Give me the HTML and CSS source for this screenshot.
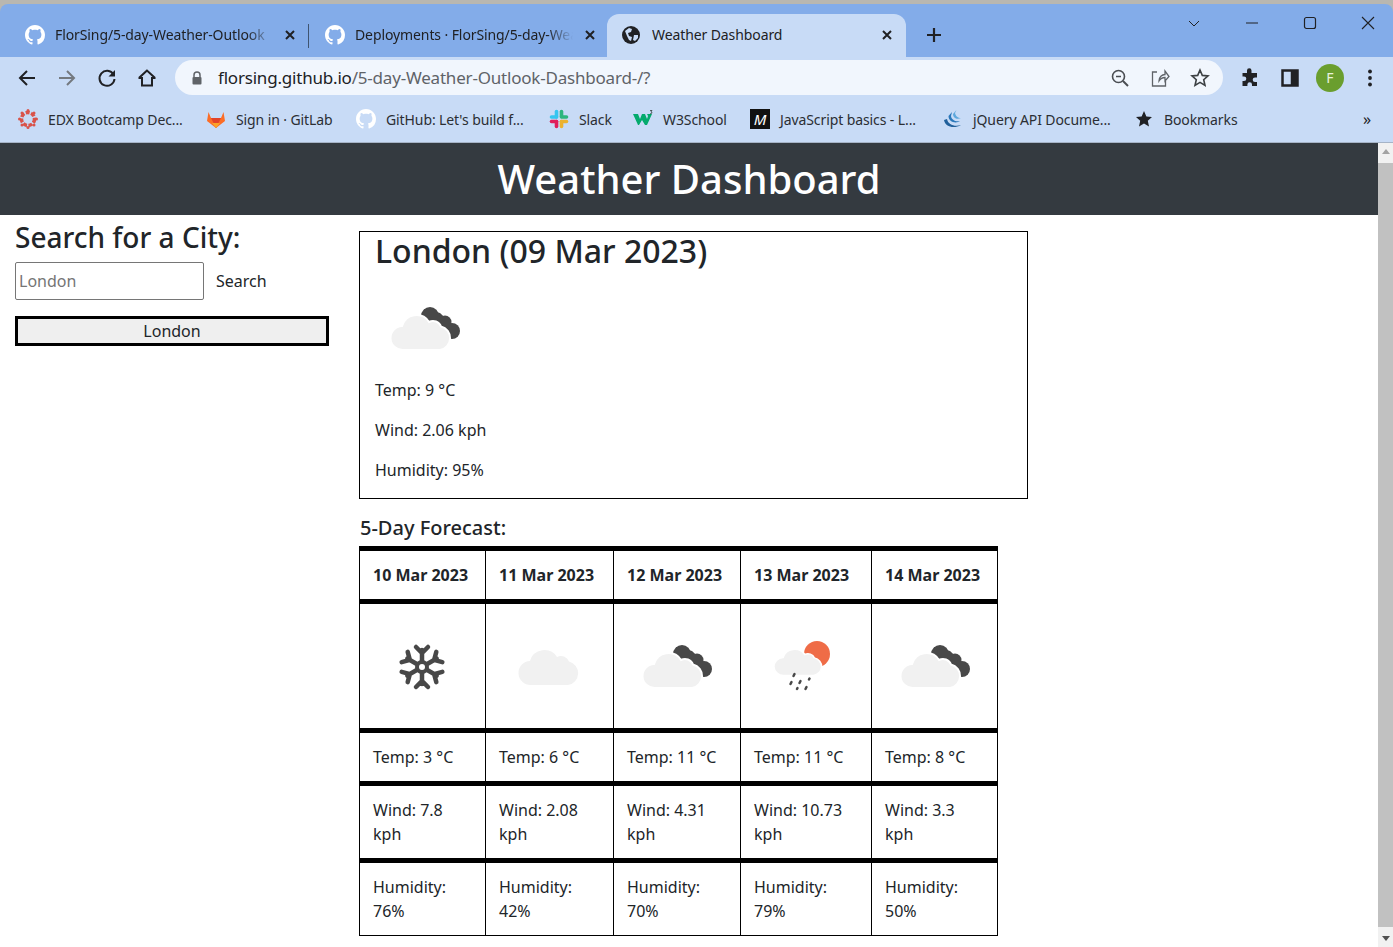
FILE: index.html
```html
<!DOCTYPE html>
<html lang="en">
<head>
    <meta charset="UTF-8">
    <title>Weather Dashboard</title>
    <link rel="stylesheet" href="styles.css">
</head>
<body>
    <svg class="defs" width="0" height="0">
        <defs>
            <path id="github" d="M8 0C3.58 0 0 3.58 0 8c0 3.54 2.29 6.53 5.47 7.59.4.07.55-.17.55-.38 0-.19-.01-.82-.01-1.49-2.01.37-2.53-.49-2.69-.94-.09-.23-.48-.94-.82-1.13-.28-.15-.68-.52-.01-.53.63-.01 1.08.58 1.23.82.72 1.21 1.87.87 2.33.66.07-.52.28-.87.51-1.07-1.78-.2-3.64-.89-3.64-3.95 0-.87.31-1.59.82-2.15-.08-.2-.36-1.02.08-2.12 0 0 .67-.21 2.2.82.64-.18 1.32-.27 2-.27.68 0 1.36.09 2 .27 1.53-1.04 2.2-.82 2.2-.82.44 1.1.16 1.92.08 2.12.51.56.82 1.27.82 2.15 0 3.07-1.87 3.75-3.65 3.95.29.25.54.73.54 1.48 0 1.07-.01 1.93-.01 2.2 0 .21.15.46.55.38A8.013 8.013 0 0016 8c0-4.42-3.58-8-8-8z"/>
            <path id="close" d="M2 2l8 8M10 2l-8 8" fill="none" stroke="#202124" stroke-width="2"/>
            <path id="cloud-shape" d="M28 72a12 12 0 0 1-1-24 15 15 0 0 1 27-4 8.500 8.500 0 0 1 12 4.500 12 12 0 0 1-1 23.500z"/>
            <g id="dark-cloud">
                <circle cx="55" cy="38" r="9" fill="#484848"/>
                <circle cx="70" cy="44" r="6.500" fill="#484848"/>
                <circle cx="77" cy="53" r="8" fill="#484848"/>
                <path d="M49 31l16 4 14 13 4 10-8 3-25-21z" fill="#484848"/>
                <use href="#cloud-shape" fill="#f1f1f1" stroke="#fff" stroke-width="2"/>
            </g>
        </defs>
    </svg>

    <div class="window">
        <div class="tab-strip">
            <div class="tab">
                <svg class="favicon" viewBox="0 0 16 16"><use href="#github" fill="#fff"/></svg>
                <span class="tab-title fade">FlorSing/5-day-Weather-Outlook</span>
                <svg class="tab-close" viewBox="0 0 12 12"><use href="#close"/></svg>
            </div>
            <div class="tab-sep"></div>
            <div class="tab">
                <svg class="favicon" viewBox="0 0 16 16"><use href="#github" fill="#fff"/></svg>
                <span class="tab-title fade">Deployments · FlorSing/5-day-Weather</span>
                <svg class="tab-close" viewBox="0 0 12 12"><use href="#close"/></svg>
            </div>
            <div class="tab active">
                <svg class="favicon" viewBox="0 0 20 20">
                    <circle cx="10" cy="10" r="9" fill="#202124"/>
                    <path d="M4 6l4-3 3 1-1 3-3 1 1 3 3 1-1 4-2-1-2-4zM13 10l4 0 0 3-3 3-2-1z" fill="#c8dbf6"/>
                </svg>
                <span class="tab-title">Weather Dashboard</span>
                <svg class="tab-close" viewBox="0 0 12 12"><use href="#close"/></svg>
            </div>
            <svg class="new-tab" viewBox="0 0 16 16"><path d="M8 1v14M1 8h14" stroke="#202124" stroke-width="2.200"/></svg>
            <div class="window-btns">
                <svg viewBox="0 0 14 14"><path d="M2 5l5 5 5-5" fill="none" stroke="#202124"/></svg>
                <svg viewBox="0 0 14 14"><path d="M1 7h12" stroke="#202124" stroke-width="1.200"/></svg>
                <svg viewBox="0 0 14 14"><rect x="1.500" y="1.500" width="11" height="11" rx="2" fill="none" stroke="#202124" stroke-width="1.200"/></svg>
                <svg viewBox="0 0 14 14"><path d="M1 1l12 12M13 1L1 13" stroke="#202124" stroke-width="1.100"/></svg>
            </div>
        </div>

        <div class="toolbar">
            <svg class="tool" viewBox="0 0 20 20"><path d="M18 10H3M10 3l-7 7 7 7" fill="none" stroke="#202124" stroke-width="2"/></svg>
            <svg class="tool" viewBox="0 0 20 20"><path d="M2 10h15M10 3l7 7-7 7" fill="none" stroke="#74797f" stroke-width="2"/></svg>
            <svg class="tool" viewBox="0 0 20 20"><path d="M16.500 6.500A7.500 7.500 0 1 0 17.500 11" fill="none" stroke="#202124" stroke-width="2"/><path d="M18 2v6.500h-6.500z" fill="#202124"/></svg>
            <svg class="tool" viewBox="0 0 20 20"><path d="M10 2.500L2.500 9.500V10H5v7.500h10V10h2.500v-.5z" fill="none" stroke="#202124" stroke-width="2"/></svg>
            <div class="omnibox">
                <svg class="lock" viewBox="0 0 12 14"><path d="M3 6V4a3 3 0 0 1 6 0v2" fill="none" stroke="#5f6368" stroke-width="1.500"/><rect x="1.500" y="6" width="9" height="7.500" rx="1" fill="#5f6368"/></svg>
                <span class="url"><b>florsing.github.io</b>/5-day-Weather-Outlook-Dashboard-/?</span>
                <svg class="omni-icon" viewBox="0 0 20 20"><circle cx="8.500" cy="8.500" r="6" fill="none" stroke="#4a4d52" stroke-width="1.600"/><path d="M13 13l5 5" stroke="#4a4d52" stroke-width="2"/><path d="M6 8.500h5" stroke="#4a4d52" stroke-width="1.400"/></svg>
                <svg class="omni-icon" viewBox="0 0 20 20"><path d="M7 4H2.500v14h13v-5M9 13c0-4 3-6.500 6-6.500V3l4 5.500L15 13V9.500c-3 0-4.500 1-6 3.500z" fill="none" stroke="#5f6368" stroke-width="1.300"/></svg>
                <svg class="omni-icon" viewBox="0 0 20 20"><path d="M10 2l2.300 5.400 5.700.5-4.300 3.800 1.300 5.700L10 14.400l-5 3 1.300-5.700L2 7.900l5.700-.5z" fill="none" stroke="#3c4043" stroke-width="1.600"/></svg>
            </div>
            <svg class="tool" viewBox="0 0 20 20"><path d="M7 2.500a2.200 2.200 0 0 1 4.500 0V5H17v4.500h-2a2.300 2.300 0 0 0 0 4.600h2V18h-5v-1.500a2.300 2.300 0 0 0-4.600 0V18H2.500v-5H4a2.300 2.300 0 0 0 0-4.600H2.500V5H7z" fill="#202124"/></svg>
            <svg class="tool" viewBox="0 0 20 20"><path d="M2.500 2.500h15v15h-15zM12 2.500v15" fill="none" stroke="#202124" stroke-width="2.500"/><rect x="12" y="3" width="5" height="14" fill="#202124"/></svg>
            <div class="avatar">F</div>
            <svg class="tool" viewBox="0 0 20 20"><circle cx="10" cy="3.500" r="1.900" fill="#202124"/><circle cx="10" cy="10" r="1.900" fill="#202124"/><circle cx="10" cy="16.500" r="1.900" fill="#202124"/></svg>
        </div>

        <div class="bookmarks">
            <div class="bookmark">
                <svg class="mark" viewBox="0 0 20 20">
                    <circle cx="10" cy="10" r="6.500" fill="none" stroke="#d9534a" stroke-width="3.500" stroke-dasharray="4 1.500"/>
                    <g fill="#d9534a"><circle cx="10" cy="1.500" r="1.500"/><circle cx="10" cy="18.500" r="1.500"/><circle cx="1.500" cy="10" r="1.500"/><circle cx="18.500" cy="10" r="1.500"/><circle cx="4" cy="4" r="1.500"/><circle cx="16" cy="4" r="1.500"/><circle cx="4" cy="16" r="1.500"/><circle cx="16" cy="16" r="1.500"/></g>
                </svg>
                <span>EDX Bootcamp Dec...</span>
            </div>
            <div class="bookmark">
                <svg class="mark" viewBox="0 0 20 20">
                    <path d="M10 19L1 12l1.500-9 2.500 6h10l2.500-6 1.500 9z" fill="#fc6d26"/>
                    <path d="M10 19L5 9h10z" fill="#e24329"/>
                    <path d="M10 19l-4-5h8z" fill="#fca326"/>
                </svg>
                <span>Sign in · GitLab</span>
            </div>
            <div class="bookmark">
                <svg class="mark" viewBox="0 0 16 16"><use href="#github" fill="#fff"/></svg>
                <span>GitHub: Let's build f...</span>
            </div>
            <div class="bookmark">
                <svg class="mark" viewBox="0 0 20 20">
                    <g stroke-width="3.600" stroke-linecap="round">
                        <path d="M12.500 2.500v5.500" stroke="#36c5f0" transform="translate(-5 0)"/>
                        <path d="M2.500 8h5" stroke="#36c5f0"/>
                        <path d="M12.500 2.500v5" stroke="#2eb67d"/>
                        <path d="M12.500 8h5" stroke="#2eb67d"/>
                        <path d="M12.500 12.500h5" stroke="#ecb22e"/>
                        <path d="M12.500 12.500v5" stroke="#ecb22e"/>
                        <path d="M2.500 12.500h5" stroke="#e01e5a"/>
                        <path d="M7.500 12.500v5" stroke="#e01e5a"/>
                    </g>
                </svg>
                <span>Slack</span>
            </div>
            <div class="bookmark">
                <svg class="mark" viewBox="0 0 20 20">
                    <path d="M0 5h5l2 5 2-5h3l2 5 1-3-1-2h5l-5 11h-2l-3-5-3 5H5z" fill="#04aa6d"/>
                    <path d="M17 1.500h2l-1 1.200a1 1 0 1 1-1 1.500" fill="none" stroke="#1f2a24" stroke-width=".7"/>
                </svg>
                <span>W3School</span>
            </div>
            <div class="bookmark">
                <div class="m-logo">M</div>
                <span>JavaScript basics - L...</span>
            </div>
            <div class="bookmark">
                <svg class="mark" viewBox="0 0 20 20">
                    <path d="M1 11c1 7 10 9 17 5-6 2-13 0-14-6z" fill="#21609b"/>
                    <path d="M5.500 7c0 6 7 8 12 5-5 1-9-1-9.500-5L9 3z" fill="#2b78ba"/>
                    <path d="M10 5c0 4 4 6 8 4-3 0-5.500-2-6-5l1.500-3z" fill="#5ea8dc"/>
                </svg>
                <span>jQuery API Docume...</span>
            </div>
            <div class="bookmark">
                <svg class="mark" viewBox="0 0 20 20"><path d="M10 2l2.400 5.400 5.600.6-4.200 3.800 1.200 5.700L10 14.600l-5 2.900 1.200-5.700L2 8l5.600-.6z" fill="#202124"/></svg>
                <span>Bookmarks</span>
            </div>
            <div class="more">»</div>
        </div>

        <div class="viewport">
            <div class="page">
                <header class="page-header">
                    <h1>Weather Dashboard</h1>
                </header>
                <div class="content">
                    <aside class="sidebar">
                        <h3>Search for a City:</h3>
                        <div class="search-row">
                            <input class="search-input" type="text" placeholder="London">
                            <span class="search-btn">Search</span>
                        </div>
                        <button class="city-btn">London</button>
                    </aside>
                    <main class="main">
                        <section class="today">
                            <h2>London (09 Mar 2023)</h2>
                            <svg class="today-icon" viewBox="0 0 100 100"><use href="#dark-cloud"/></svg>
                            <p>Temp: 9 °C</p>
                            <p>Wind: 2.06 kph</p>
                            <p>Humidity: 95%</p>
                        </section>
                        <h4>5-Day Forecast:</h4>
                        <table class="forecast">
                            <tr>
                                <th>10 Mar 2023</th>
                                <th>11 Mar 2023</th>
                                <th>12 Mar 2023</th>
                                <th>13 Mar 2023</th>
                                <th>14 Mar 2023</th>
                            </tr>
                            <tr>
                                <td>
                                    <svg class="weather-icon" viewBox="0 0 100 100">
                                        <g stroke="#484848" stroke-width="4.500" fill="none" stroke-linecap="round">
                                            <g id="arm">
                                                <path d="M49 50V34M43 31l6 6 6-6"/>
                                            </g>
                                            <use href="#arm" transform="rotate(60 49 51)"/>
                                            <use href="#arm" transform="rotate(120 49 51)"/>
                                            <use href="#arm" transform="rotate(180 49 51)"/>
                                            <use href="#arm" transform="rotate(240 49 51)"/>
                                            <use href="#arm" transform="rotate(300 49 51)"/>
                                        </g>
                                        <circle cx="49" cy="51" r="7" fill="#484848"/>
                                        <circle cx="49" cy="51" r="3" fill="#fff"/>
                                    </svg>
                                </td>
                                <td>
                                    <svg class="weather-icon" viewBox="0 0 100 100"><use href="#cloud-shape" fill="#f1f1f1" transform="translate(4 -3)"/></svg>
                                </td>
                                <td>
                                    <svg class="weather-icon" viewBox="0 0 100 100"><use href="#dark-cloud"/></svg>
                                </td>
                                <td>
                                    <svg class="weather-icon" viewBox="0 0 100 100">
                                        <circle cx="63" cy="38" r="13" fill="#ef6c47"/>
                                        <use href="#cloud-shape" fill="#f1f1f1" stroke="#fff" stroke-width="2" transform="translate(7.500 5.500) scale(.8 .75)"/>
                                        <g stroke="#484848" stroke-width="2.500" stroke-linecap="round">
                                            <path d="M40.500 58l-1 2M37.500 66l-1 2M46.500 65l-1 2M55.500 62.500l-.5 1M43.500 72l-.5 1M52.500 71l-1 2"/>
                                        </g>
                                    </svg>
                                </td>
                                <td>
                                    <svg class="weather-icon" viewBox="0 0 100 100"><use href="#dark-cloud"/></svg>
                                </td>
                            </tr>
                            <tr>
                                <td>Temp: 3 °C</td>
                                <td>Temp: 6 °C</td>
                                <td>Temp: 11 °C</td>
                                <td>Temp: 11 °C</td>
                                <td>Temp: 8 °C</td>
                            </tr>
                            <tr>
                                <td>Wind: 7.8 kph</td>
                                <td>Wind: 2.08 kph</td>
                                <td>Wind: 4.31 kph</td>
                                <td>Wind: 10.73 kph</td>
                                <td>Wind: 3.3 kph</td>
                            </tr>
                            <tr>
                                <td>Humidity: 76%</td>
                                <td>Humidity: 42%</td>
                                <td>Humidity: 70%</td>
                                <td>Humidity: 79%</td>
                                <td>Humidity: 50%</td>
                            </tr>
                        </table>
                    </main>
                </div>
            </div>
            <div class="scrollbar">
                <div class="arrow up"></div>
                <div class="thumb"></div>
                <div class="arrow down"></div>
            </div>
        </div>
    </div>
</body>
</html>
```

FILE: styles.css
```css
* {
    box-sizing: border-box;
}
html, body {
    margin: 0;
    height: 100%;
    overflow: hidden;
}
body {
    font-family: "Noto Sans", "Open Sans", Arial, sans-serif;
    color: #212529;
    background: #b9b7b0;
}
.defs {
    position: absolute;
}
.window {
    margin-top: 4px;
    height: 943px;
    display: flex;
    flex-direction: column;
    border-radius: 8px 8px 0 0;
    overflow: hidden;
}

/* tabs */
.tab-strip {
    height: 53px;
    flex: none;
    background: #83ace9;
    display: grid;
    grid-template-columns: 298px 2px 297px 299px 56px 1fr;
    padding: 10px 0 0 10px;
    align-items: stretch;
}
.tab {
    display: flex;
    align-items: center;
    padding: 0 0 2px 15px;
    height: 43px;
    color: #202124;
}
.tab.active {
    background: #c8dbf6;
    border-radius: 12px 12px 0 0;
    padding-left: 14px;
}
.tab-sep {
    width: 1px;
    height: 24px;
    margin-top: 10px;
    background: #3f5470;
}
.favicon {
    width: 20px;
    height: 20px;
    flex: none;
}
.tab-title {
    margin-left: 10px;
    font-size: 14px;
    white-space: nowrap;
    overflow: hidden;
    width: 218px;
    flex: none;
    letter-spacing: -0.1px;
}
.tab.active .tab-title {
    margin-left: 11px;
}
.fade {
    -webkit-mask-image: linear-gradient(to right, #000 88%, transparent 100%);
    mask-image: linear-gradient(to right, #000 88%, transparent 100%);
}
.tab-close {
    width: 12px;
    height: 12px;
    margin-left: 11px;
    flex: none;
}
.new-tab {
    width: 16px;
    height: 16px;
    margin: 13px 0 0 20px;
}
.window-btns {
    display: flex;
    justify-content: flex-end;
    gap: 44px;
    padding: 2px 18px 0 0;
    margin-top: -10px;
    align-items: flex-start;
}
.window-btns svg {
    width: 14px;
    height: 14px;
    margin-top: 10px;
}

/* toolbar */
.toolbar {
    height: 44px;
    flex: none;
    background: #c8dbf6;
    display: flex;
    align-items: center;
    padding: 0 13px 3px 17px;
}
.tool {
    width: 20px;
    height: 20px;
    flex: none;
    margin-right: 20px;
}
.toolbar .tool:nth-child(4) {
    margin-right: 18px;
}
.toolbar .tool:last-child {
    margin-right: 0;
}
.omnibox {
    width: 1048px;
    height: 35px;
    flex: none;
    background: #f1f6fd;
    border-radius: 18px;
    display: flex;
    align-items: center;
    padding: 0 13px 0 16px;
    margin-right: 17px;
}
.lock {
    width: 12px;
    height: 14px;
    flex: none;
}
.url {
    margin-left: 15px;
    font-size: 17px;
    color: #5f6368;
    flex: 1;
    white-space: nowrap;
    letter-spacing: -0.2px;
}
.url b {
    font-weight: 400;
    color: #202124;
}
.omni-icon {
    width: 20px;
    height: 20px;
    flex: none;
    margin-left: 20px;
}
.avatar {
    width: 28px;
    height: 28px;
    flex: none;
    border-radius: 50%;
    background: #6a9e2e;
    color: #e8f3dc;
    font-size: 14px;
    display: flex;
    align-items: center;
    justify-content: center;
    margin-right: 16px;
    margin-left: -4px;
}

/* bookmarks bar */
.bookmarks {
    height: 42px;
    flex: none;
    background: #c8dbf6;
    border-bottom: 1px solid #a6b4c7;
    display: grid;
    grid-template-columns: 188px 150px 193px 84px 117px 193px 191px 1fr 30px;
    padding: 0 0 5px 18px;
    align-items: center;
    font-size: 14px;
    color: #2b2e33;
}
.bookmark {
    display: flex;
    align-items: center;
    gap: 10px;
    white-space: nowrap;
    letter-spacing: -0.1px;
}
.mark {
    width: 20px;
    height: 20px;
    flex: none;
}
.m-logo {
    width: 20px;
    height: 20px;
    flex: none;
    background: #111;
    color: #fff;
    font-size: 15px;
    font-style: italic;
    line-height: 20px;
    text-align: center;
}
.more {
    font-size: 16px;
    color: #202124;
}

/* page */
.viewport {
    flex: 1;
    display: flex;
    min-height: 0;
    background: #fff;
}
.page {
    flex: 1;
    min-width: 0;
    overflow: hidden;
    font-size: 16px;
    line-height: 24px;
}
.page-header {
    background: #343a40;
    height: 72px;
    display: flex;
    align-items: center;
    justify-content: center;
}
h1 {
    margin: 0;
    color: #fff;
    font-size: 40px;
    font-weight: 500;
    line-height: 1.2;
}
.content {
    display: grid;
    grid-template-columns: 314px 669px;
    gap: 30px;
    padding: 0 15px;
}
.sidebar h3 {
    margin: 6px 0 7px;
    font-size: 28px;
    font-weight: 500;
    line-height: 33.6px;
}
.search-row {
    display: flex;
    align-items: center;
    gap: 12px;
}
.search-input {
    width: 189px;
    height: 38px;
    border: 1px solid #767676;
    border-radius: 2px;
    padding: 0 3px;
    font: inherit;
}
.search-input::placeholder {
    color: #757575;
}
.city-btn {
    display: block;
    width: 100%;
    height: 30px;
    margin-top: 16px;
    border: 3px solid #000;
    background: #efefef;
    color: #212529;
    font: inherit;
    padding: 0;
}
.main {
    padding-top: 16px;
}
.today {
    border: 1px solid #000;
    padding: 0 15px;
    height: 268px;
}
.today h2 {
    margin: 0 0 8px;
    font-size: 32px;
    font-weight: 500;
    line-height: 38.4px;
}
.today-icon {
    display: block;
    width: 100px;
    height: 100px;
}
.today p {
    margin: 0 0 16px;
}
h4 {
    margin: 17px 0 6px 1px;
    font-size: 20px;
    font-weight: 500;
    line-height: 24px;
}
.forecast {
    border-collapse: collapse;
    table-layout: fixed;
    width: 638px;
    color: #212529;
}
.forecast th,
.forecast td {
    padding: 12px 13px;
    border: 1px solid #000;
    text-align: left;
    vertical-align: top;
}
.forecast tr {
    border-top: 5px solid #000;
}
.forecast th {
    font-weight: 700;
    white-space: nowrap;
}
.forecast th:nth-child(1) { width: 126px; }
.forecast th:nth-child(2) { width: 128px; }
.forecast th:nth-child(3) { width: 127px; }
.forecast th:nth-child(4) { width: 131px; }
.forecast th:nth-child(5) { width: 126px; }
.weather-icon {
    display: block;
    width: 100px;
    height: 100px;
}

/* scrollbar */
.scrollbar {
    width: 15px;
    flex: none;
    background: #f1f1f1;
    display: flex;
    flex-direction: column;
    align-items: center;
}
.arrow {
    width: 0;
    height: 0;
    flex: none;
    border-left: 4px solid transparent;
    border-right: 4px solid transparent;
}
.arrow.up {
    border-bottom: 5px solid #a3a3a3;
    margin: 6px 0 9px;
}
.arrow.down {
    border-top: 5px solid #505050;
    margin: 9px 0 6px;
}
.thumb {
    flex: 1;
    width: 100%;
    background: #c1c1c1;
    margin-bottom: 0;
}
```
